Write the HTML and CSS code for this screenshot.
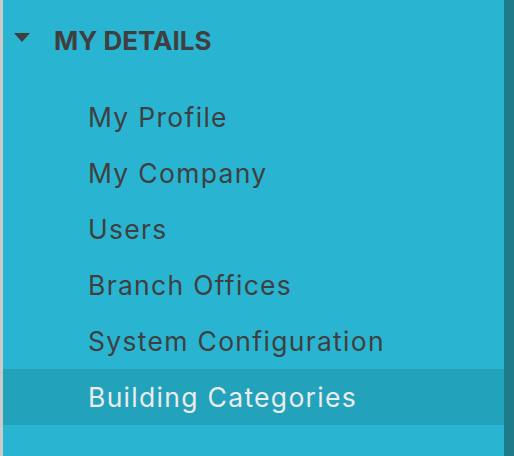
FILE: index.html
```html
<!DOCTYPE html>
<html lang="en">
<head>
<meta charset="utf-8">
<title>My Details</title>
<link rel="stylesheet" href="styles.css">
</head>
<body>
<nav class="sidebar">
  <div class="section-head">
    <svg class="caret" width="16" height="9" viewBox="0 0 16 9" aria-hidden="true"><polygon points="0,0 16,0 8,9" fill="#3f3f3f"/></svg>
    <span class="section-title">MY DETAILS</span>
  </div>
  <ul class="menu">
    <li class="menu-item">My Profile</li>
    <li class="menu-item">My Company</li>
    <li class="menu-item">Users</li>
    <li class="menu-item">Branch Offices</li>
    <li class="menu-item">System Configuration</li>
    <li class="menu-item active">Building Categories</li>
  </ul>
</nav>
</body>
</html>
```

FILE: styles.css
```css
html, body {
  margin: 0;
  padding: 0;
  height: 100%;
  overflow: hidden;
}

body {
  font-family: Inter, "Open Sans", sans-serif;
  background: #29b5d1;
}

.sidebar {
  box-sizing: border-box;
  width: 514px;
  height: 456px;
  background: #29b5d1;
  border-left: 3px solid #cbcbcb;
  border-right: 10px solid #1c7a89;
  color: #3f3f3f;
}

.section-head {
  display: flex;
  align-items: center;
  height: 80px;
  padding-left: 11px;
}

.caret {
  display: block;
  margin-top: -5px;
}

.section-title {
  margin-left: 24px;
  font-size: 26px;
  font-weight: 700;
}

.menu {
  list-style: none;
  margin: 9px 0 0;
  padding: 0;
}

.menu-item {
  height: 56px;
  line-height: 56px;
  padding-left: 85px;
  font-size: 26.5px;
  font-weight: 400;
  letter-spacing: 1.3px;
}

.menu-item.active {
  background: #22a2bb;
  color: #ececec;
}
```
